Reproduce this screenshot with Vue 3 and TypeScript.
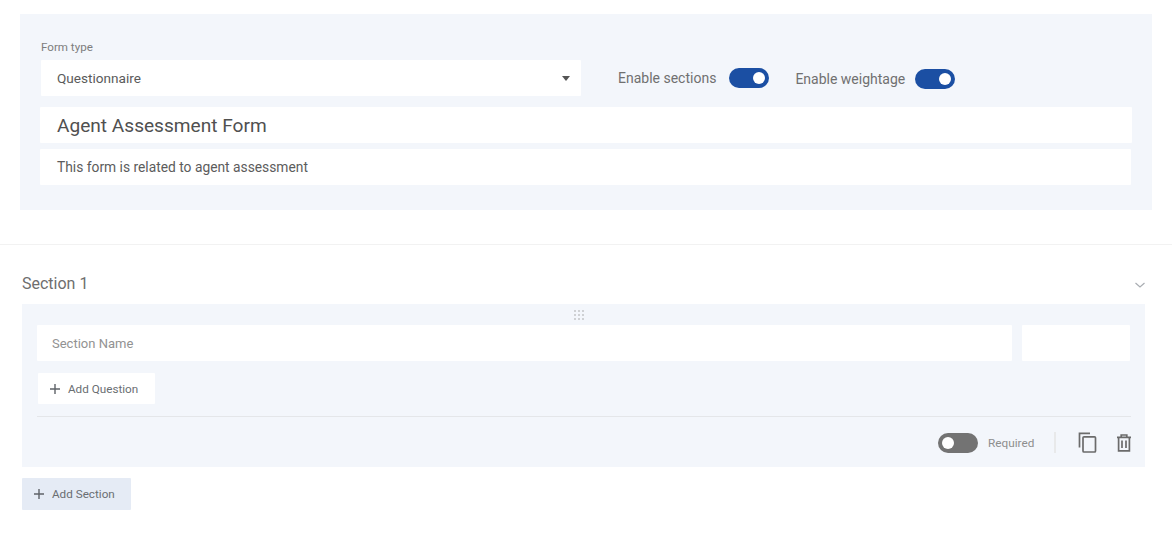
<script setup lang="ts">
const dots: number[] = [0, 1, 2, 3, 4, 5, 6, 7, 8]
</script>

<template>
  <div class="page">
    <section class="head-panel">
      <div class="type-row">
        <div class="type-col">
          <label class="small-label">Form type</label>
          <div class="select field">
            <span>Questionnaire</span>
            <span class="caret"></span>
          </div>
        </div>
        <div class="switch-item first">
          <span>Enable sections</span>
          <span class="switch on"><i></i></span>
        </div>
        <div class="switch-item second">
          <span>Enable weightage</span>
          <span class="switch on"><i></i></span>
        </div>
      </div>
      <div class="field title-field">Agent Assessment Form</div>
      <div class="field desc-field">This form is related to agent assessment</div>
    </section>

    <hr class="divider" />

    <div class="section-title">
      <span>Section 1</span>
      <svg class="chevron" width="12" height="8" viewBox="0 0 12 8" fill="none">
        <path d="M1.5 2 L6 6 L10.5 2" stroke="#a9adb2" stroke-width="1.2" />
      </svg>
    </div>

    <section class="section-panel">
      <div class="handle">
        <span class="grip"><i v-for="d in dots" :key="d"></i></span>
      </div>
      <div class="name-row">
        <div class="field name-field">Section Name</div>
        <div class="field weight-field"></div>
      </div>
      <button class="btn question-btn" type="button">
        <svg width="10" height="10" viewBox="0 0 10 10"><path d="M5 0v10M0 5h10" stroke="#5f6368" stroke-width="1.4" /></svg>
        <span>Add Question</span>
      </button>
      <div class="panel-foot">
        <span class="switch off"><i></i></span>
        <span class="required">Required</span>
        <span class="sep"></span>
        <svg class="copy" width="19" height="21" viewBox="0 0 19 21" fill="none" stroke="#6b6b6b" stroke-width="1.7">
          <path d="M1.5 15.5V1.3H12" />
          <rect x="5" y="4.8" width="12.5" height="15.2" rx="1" />
        </svg>
        <svg class="trash" width="16" height="18" viewBox="0 0 16 18" fill="none" stroke="#6b6b6b" stroke-width="1.7">
          <path d="M1 3.3h14M5.2 3V1h5.6v2" />
          <path d="M2.6 3.3v13.6h10.8V3.3" />
          <path d="M6 6.5v7.5M10 6.5v7.5" />
        </svg>
      </div>
    </section>

    <button class="btn section-btn" type="button">
      <svg width="10" height="10" viewBox="0 0 10 10"><path d="M5 0v10M0 5h10" stroke="#5f6368" stroke-width="1.4" /></svg>
      <span>Add Section</span>
    </button>
  </div>
</template>

<style>
html, body { margin: 0; background: #fff; }
</style>

<style scoped>
.page {
  width: 1172px;
  height: 533px;
  overflow: hidden;
  box-sizing: border-box;
  padding-top: 14px;
  font-family: Roboto, "Liberation Sans", sans-serif;
  color: #555;
  background: #fff;
}
.head-panel {
  box-sizing: border-box;
  width: 1132px;
  height: 196px;
  margin-left: 20px;
  padding: 27px 20px 0;
  background: #f3f6fb;
}
.type-row { display: flex; align-items: flex-end; }
.type-col { display: flex; flex-direction: column; margin-left: 1px; }
.small-label {
  font-size: 11.6px;
  line-height: 13px;
  margin-bottom: 6px;
  color: #7d7d7d;
}
.field {
  box-sizing: border-box;
  height: 36px;
  background: #fff;
  display: flex;
  align-items: center;
  padding-left: 17px;
  border-radius: 1px;
}
.select {
  width: 540px;
  justify-content: space-between;
  padding-left: 16px;
  padding-right: 11px;
  font-size: 13.6px;
  color: #5a5a5a;
}
.caret {
  width: 0;
  height: 0;
  border-left: 4.5px solid transparent;
  border-right: 4.5px solid transparent;
  border-top: 5px solid #555;
}
.switch-item {
  height: 36px;
  display: flex;
  align-items: center;
  gap: 13px;
  font-size: 14px;
  color: #707070;
}
.switch-item.first { margin-left: 37px; }
.switch-item.second { margin-left: 26px; gap: 10px; padding-top: 2px; box-sizing: border-box; }
.switch {
  box-sizing: border-box;
  display: inline-flex;
  align-items: center;
  flex: none;
  width: 40px;
  height: 20px;
  border-radius: 10px;
  padding: 0 4px;
}
.switch i {
  display: block;
  width: 12px;
  height: 12px;
  border-radius: 50%;
  background: #fff;
}
.switch.on { background: #1b4fa3; justify-content: flex-end; }
.switch.off { background: #737373; justify-content: flex-start; }
.title-field {
  width: 1092px;
  margin-top: 11px;
  font-size: 19.1px;
  color: #505050;
}
.desc-field {
  width: 1091px;
  margin-top: 6px;
  font-size: 13.8px;
  color: #5c5c5c;
}
.divider {
  margin: 34px 0 0;
  border: 0;
  height: 1px;
  background: #f2f2f2;
}
.section-title {
  width: 1124px;
  margin: 30px 0 0 22px;
  height: 18px;
  display: flex;
  justify-content: space-between;
  align-items: center;
  font-size: 16px;
  line-height: 18px;
  color: #6e6e6e;
}
.chevron { margin-top: 1px; }
.section-panel {
  box-sizing: border-box;
  width: 1123px;
  height: 163px;
  margin: 11px 0 0 22px;
  padding: 0 15px;
  background: #f3f6fb;
}
.handle {
  height: 21px;
  display: flex;
  align-items: center;
  justify-content: center;
  padding-right: 10px;
  padding-top: 1px;
  box-sizing: border-box;
}
.grip {
  display: grid;
  grid-template-columns: repeat(3, 2px);
  gap: 2px;
}
.grip i {
  display: block;
  width: 2px;
  height: 2px;
  background: #cfd1d4;
}
.name-row { display: flex; gap: 10px; }
.name-field {
  width: 975px;
  padding-left: 15px;
  font-size: 13px;
  color: #929292;
}
.weight-field { width: 108px; padding: 0; }
.btn {
  box-sizing: border-box;
  display: flex;
  align-items: center;
  gap: 8px;
  border: 0;
  padding: 0 0 0 12px;
  font-family: inherit;
  font-size: 11.7px;
  color: #6a6e72;
  border-radius: 1px;
}
.question-btn {
  width: 117px;
  height: 31px;
  margin: 12px 0 0 1px;
  background: #fff;
}
.panel-foot {
  margin-top: 12px;
  width: 1094px;
  height: 50px;
  box-sizing: border-box;
  border-top: 1px solid #e4e6e9;
  display: flex;
  align-items: center;
  padding: 2px 0 0 901px;
}
.panel-foot > * { flex: none; }
.required {
  margin-left: 10px;
  font-size: 11.8px;
  color: #8e8e8e;
}
.sep {
  width: 2px;
  height: 21px;
  margin-left: 20px;
  background: #e8e9ea;
}
.copy { margin-left: 22px; }
.trash { margin-left: 19px; }
.section-btn {
  width: 109px;
  height: 32px;
  margin: 11px 0 0 22px;
  background: #e5ebf5;
}
</style>
